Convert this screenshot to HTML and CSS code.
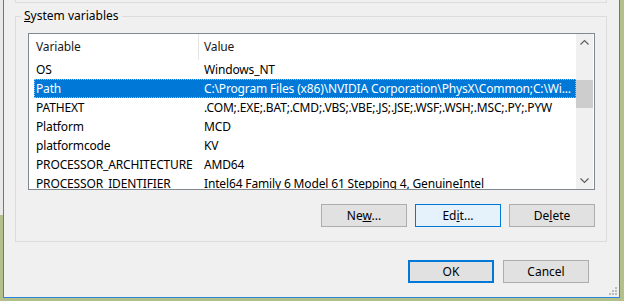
FILE: index.html
```html
<!doctype html>
<html>
<head>
    <title>Environment Variables</title>
<link rel="stylesheet" href="styles.css">
</head>
<body>
<div class="window">
    <div class="prev-group"></div>
    <fieldset class="group">
        <legend><u>S</u>ystem variables</legend>
        <div class="listbox">
            <div class="list-body">
                <div class="list-header">
                    <div class="col-name">Variable</div>
                    <div class="col-value">Value</div>
                </div>
                <div class="row"><div class="col-name">OS</div><div class="col-value">Windows_NT</div></div>
                <div class="row selected"><div class="col-name">Path</div><div class="col-value">C:\Program Files (x86)\NVIDIA Corporation\PhysX\Common;C:\Wi...</div></div>
                <div class="row"><div class="col-name">PATHEXT</div><div class="col-value">.COM;.EXE;.BAT;.CMD;.VBS;.VBE;.JS;.JSE;.WSF;.WSH;.MSC;.PY;.PYW</div></div>
                <div class="row"><div class="col-name">Platform</div><div class="col-value">MCD</div></div>
                <div class="row"><div class="col-name">platformcode</div><div class="col-value">KV</div></div>
                <div class="row"><div class="col-name">PROCESSOR_ARCHITECTURE</div><div class="col-value">AMD64</div></div>
                <div class="row"><div class="col-name">PROCESSOR_IDENTIFIER</div><div class="col-value">Intel64 Family 6 Model 61 Stepping 4, GenuineIntel</div></div>
            </div>
            <div class="scrollbar">
                <div class="arrow">
                    <svg width="17" height="17" viewBox="0 0 17 17"><path d="M4.5 10.5 L8.5 6.5 L12.5 10.5" fill="none" stroke="#606060" stroke-width="1.2"/></svg>
                </div>
                <div class="track"><div class="thumb"></div></div>
                <div class="arrow">
                    <svg width="17" height="17" viewBox="0 0 17 17"><path d="M4.5 6.5 L8.5 10.5 L12.5 6.5" fill="none" stroke="#606060" stroke-width="1.2"/></svg>
                </div>
            </div>
        </div>
        <div class="button-row">
            <button class="btn">Ne<u>w</u>...</button>
            <button class="btn hover">Ed<u>i</u>t...</button>
            <button class="btn">De<u>l</u>ete</button>
        </div>
    </fieldset>
    <div class="button-row dialog-buttons">
        <button class="btn default">OK</button>
        <button class="btn">Cancel</button>
    </div>
    <!-- resize grip -->
    <svg class="size-grip" width="8" height="8" viewBox="0 0 8 8">
        <rect x="6" y="0" width="2" height="2" fill="#bcbcbc"/>
        <rect x="3" y="3" width="2" height="2" fill="#bcbcbc"/>
        <rect x="6" y="3" width="2" height="2" fill="#bcbcbc"/>
        <rect x="0" y="6" width="2" height="2" fill="#bcbcbc"/>
        <rect x="3" y="6" width="2" height="2" fill="#bcbcbc"/>
        <rect x="6" y="6" width="2" height="2" fill="#bcbcbc"/>
    </svg>
</div>
</body>
</html>
```

FILE: styles.css
```css
body {
    margin: 0;
    font-family: "Noto Sans", "Open Sans", sans-serif;
    font-size: 12px;
    color: #000;
    background: linear-gradient(#e9e9e9, #e9e9e9) left top / 3px 215px no-repeat, #b3c08b;
}
.window {
    position: relative;
    margin-left: 3px;
    width: 615px;
    height: 297px;
    border: 1px solid #2b88d8;
    border-top: none;
    background-color: #f0f0f0;
}
.prev-group {
    height: 2px;
    margin: 0 12px 0 11px;
    border: 1px solid #dcdcdc;
    border-top: none;
}
.group {
    margin: 5px 12px 0 11px;
    padding: 9px 11px 14px 12px;
    border: 1px solid #dcdcdc;
    min-width: 0;
}
.group legend {
    padding: 0 3px;
    margin-left: -7px;
    line-height: 16px;
}
.listbox {
    display: flex;
    height: 155px;
    border: 1px solid #828790;
    background-color: #fff;
}
.list-body {
    flex: 1;
    min-width: 0;
    overflow: hidden;
    padding-left: 5px;
    letter-spacing: -0.15px;
}
.list-header,
.row {
    display: grid;
    grid-template-columns: 165px 1fr;
    white-space: nowrap;
}
.list-header {
    height: 26px;
    line-height: 26px;
    color: #1a1a1a;
}
.list-header .col-name {
    border-right: 1px solid #e5e5e5;
}
.row {
    height: 19px;
    line-height: 19px;
}
.col-name {
    padding-left: 2px;
    overflow: hidden;
}
.col-value {
    padding-left: 5px;
    overflow: hidden;
}
.row.selected {
    color: #fff;
    background-color: #0078d7;
    outline: 1px dotted #8cc3ef;
    outline-offset: -1px;
}
.scrollbar {
    width: 17px;
    margin-right: 1px;
    display: flex;
    flex-direction: column;
    background-color: #f0f0f0;
}
.arrow {
    height: 17px;
}
.arrow svg {
    display: block;
}
.track {
    flex: 1;
}
.thumb {
    margin-top: 29px;
    height: 28px;
    background-color: #cdcdcd;
}
.button-row {
    display: flex;
    justify-content: flex-end;
    gap: 8px;
    margin-top: 14px;
}
.dialog-buttons {
    gap: 9px;
    margin: 18px 30px 0 0;
}
.btn {
    box-sizing: border-box;
    width: 86px;
    height: 23px;
    padding: 0;
    font-family: inherit;
    font-size: 12px;
    color: #000;
    background-color: #e1e1e1;
    border: 1px solid #adadad;
}
.btn.hover {
    background-color: #e5f1fb;
    border-color: #0078d7;
}
.btn.default {
    border: 2px solid #0078d7;
}
.size-grip {
    position: absolute;
    right: 2px;
    bottom: 2px;
}
```
